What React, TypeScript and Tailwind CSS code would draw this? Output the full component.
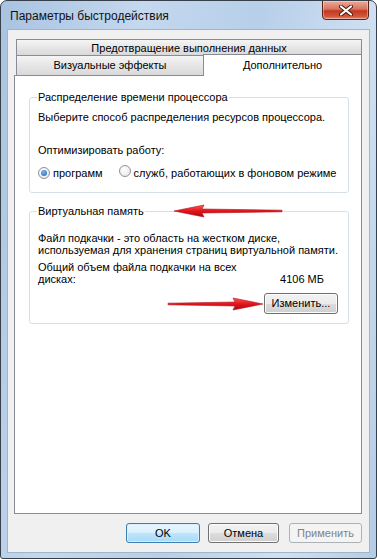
import React from "react";

const font = { fontFamily: '"Liberation Sans", Arial, sans-serif' };

function Radio({ checked }: { checked?: boolean }) {
  return (
    <span className="relative inline-flex h-[12px] w-[12px] shrink-0 items-center justify-center rounded-full border border-[#8f9296] bg-[radial-gradient(circle_at_40%_35%,#ffffff,#e2e4e6)]">
      {checked && (
        <span className="h-[6px] w-[6px] rounded-full bg-[radial-gradient(circle_at_40%_35%,#7fb6ec,#1b5fb7)]" />
      )}
    </span>
  );
}

function Arrow({ dir, length }: { dir: "left" | "right"; length: number }) {
  // red annotation arrow, drawn pointing right then mirrored
  const b = length - 30;
  const t = length - 2;
  return (
    <svg
      width={length}
      height="14"
      viewBox={`0 0 ${length} 14`}
      className={dir === "left" ? "-scale-x-100" : ""}
    >
      <defs>
        <linearGradient id={`ag-${dir}`} x1="0" y1="0" x2="0" y2="1">
          <stop offset="0" stopColor="#ff5a4f" />
          <stop offset="0.5" stopColor="#e3131b" />
          <stop offset="1" stopColor="#a80a10" />
        </linearGradient>
      </defs>
      <path
        d={`M2 6.2 L${b} 5 L${b - 2} 1 L${t} 7 L${b - 2} 13 L${b} 9 L2 7.8 Z`}
        fill={`url(#ag-${dir})`}
        stroke="#b0121a"
        strokeWidth="0.6"
        strokeLinejoin="round"
      />
    </svg>
  );
}

const tabBg =
  "border border-[#898c95] bg-[linear-gradient(to_bottom,#f5f5f5,#e6e6e6_50%,#d9d9d9)]";
const btnBg =
  "rounded-[3px] border border-[#707070] bg-[linear-gradient(to_bottom,#f2f2f2_0%,#ebebeb_50%,#dddddd_51%,#cfcfcf_100%)] shadow-[inset_0_0_0_1px_#fcfcfc]";

export default function App() {
  return (
    <div
      style={font}
      className="relative flex h-[559px] w-[377px] flex-col overflow-hidden whitespace-nowrap rounded-t-[7px] rounded-b-[3px] border border-[#37404a] bg-[linear-gradient(100deg,#a9c3e0_0%,#c4d8ee_30%,#b7cfe9_55%,#cfe0f2_80%,#b4cce6_100%)] text-[11px] text-black"
    >
      {/* title bar */}
      <div className="flex h-[28px] shrink-0 items-start">
        <span className="ml-[9px] mt-[8px] text-[12px] leading-[15px] text-[#111]">
          Параметры быстродействия
        </span>
        <div className="ml-auto mr-[7px] -mt-px flex h-[20px] w-[47px] items-center justify-center rounded-b-[4px] border border-[#5a2219] bg-[linear-gradient(to_bottom,#e9ab9c_0%,#d9735f_45%,#c4381f_55%,#d2553c_85%,#e28a6c_100%)] shadow-[inset_0_0_0_1px_rgba(255,255,255,0.35)]">
          <svg width="14" height="11" viewBox="0 0 14 11">
            <path d="M2 1.5 L12 9.5 M12 1.5 L2 9.5" stroke="#4a1a12" strokeWidth="4" strokeLinecap="round" />
            <path d="M2 1.5 L12 9.5 M12 1.5 L2 9.5" stroke="#ffffff" strokeWidth="2.2" strokeLinecap="round" />
          </svg>
        </div>
      </div>

      {/* client area */}
      <div className="mx-[6px] mb-[5px] flex flex-1 flex-col border border-[#a3b4c6] bg-[#f0f0f0] pb-[9px] pl-[6px] pr-[7px] pt-[9px]">
        {/* tabs */}
        <div className="w-[348px]">
          <div className={`ml-[2px] flex h-[17px] items-center justify-center pt-[2px] leading-none ${tabBg}`}>
            Предотвращение выполнения данных
          </div>
          <div className="-mt-px flex">
            <div className={`ml-[2px] flex h-[21px] w-[188px] items-center justify-center leading-none ${tabBg}`}>
              Визуальные эффекты
            </div>
            <div className="relative z-10 -ml-px -mt-px flex h-[22px] flex-1 items-center justify-center border border-b-0 border-[#898c95] bg-white pb-[1px] leading-none">
              Дополнительно
            </div>
          </div>

          {/* panel */}
          <div className="-mt-px flex h-[439px] flex-col border border-[#898c95] bg-white pl-[14px]">
            <fieldset className="mt-[14px] w-[320px] rounded-[3px] border border-[#d5dfe5] pb-[12px] pl-[8px] pr-[8px]">
              <legend className="ml-[-1px] px-[1px] leading-[14px]">Распределение времени процессора</legend>
              <div className="mt-[6px] leading-[14px]">Выберите способ распределения ресурсов процессора.</div>
              <div className="mt-[19px] leading-[14px]">Оптимизировать работу:</div>
              <div className="mt-[8px] flex items-center leading-[14px]">
                <Radio checked />
                <span className="ml-[3px]">программ</span>
                <span className="ml-[16px]">
                  <Radio />
                </span>
                <span className="ml-[3px]">служб, работающих в фоновом режиме</span>
              </div>
            </fieldset>

            <fieldset className="mt-[11px] w-[320px] rounded-[3px] border border-[#d5dfe5] pb-[9px] pl-[8px] pr-[10px]">
              <legend className="ml-[-1px] px-[1px] leading-[14px]">Виртуальная память</legend>
              <div className="mt-[14px] leading-[12px]">
                Файл подкачки - это область на жестком диске,
                <br />
                используемая для хранения страниц виртуальной памяти.
              </div>
              <div className="mt-[5px] leading-[12px]">Общий объем файла подкачки на всех</div>
              <div className="flex justify-between pr-[14px] leading-[12px]">
                <span>дисках:</span>
                <span>4106 МБ</span>
              </div>
              <div className="mt-[8px] flex justify-end">
                <button className={`h-[21px] w-[74px] leading-none ${btnBg}`}>Изменить...</button>
              </div>
            </fieldset>
          </div>
        </div>

        {/* dialog buttons */}
        <div className="mt-[9px] flex justify-end">
          <button className="h-[20px] w-[74px] rounded-[3px] border border-[#3c7fb1] bg-[linear-gradient(to_bottom,#eaf6fd_0%,#d9f0fc_50%,#bee6fd_51%,#a7d9f5_100%)] leading-none shadow-[inset_0_0_0_1px_#d6effc]">
            OK
          </button>
          <button className={`ml-[8px] h-[20px] w-[71px] leading-none ${btnBg}`}>Отмена</button>
          <button className="ml-[10px] h-[20px] w-[73px] rounded-[3px] border border-[#adb2b5] bg-[#f4f4f4] leading-none text-[#838383]">
            Применить
          </button>
        </div>
      </div>

      {/* red annotation arrows */}
      <div className="absolute left-[171px] top-[203px]">
        <Arrow dir="left" length={112} />
      </div>
      <div className="absolute left-[165px] top-[296px]">
        <Arrow dir="right" length={99} />
      </div>
    </div>
  );
}
